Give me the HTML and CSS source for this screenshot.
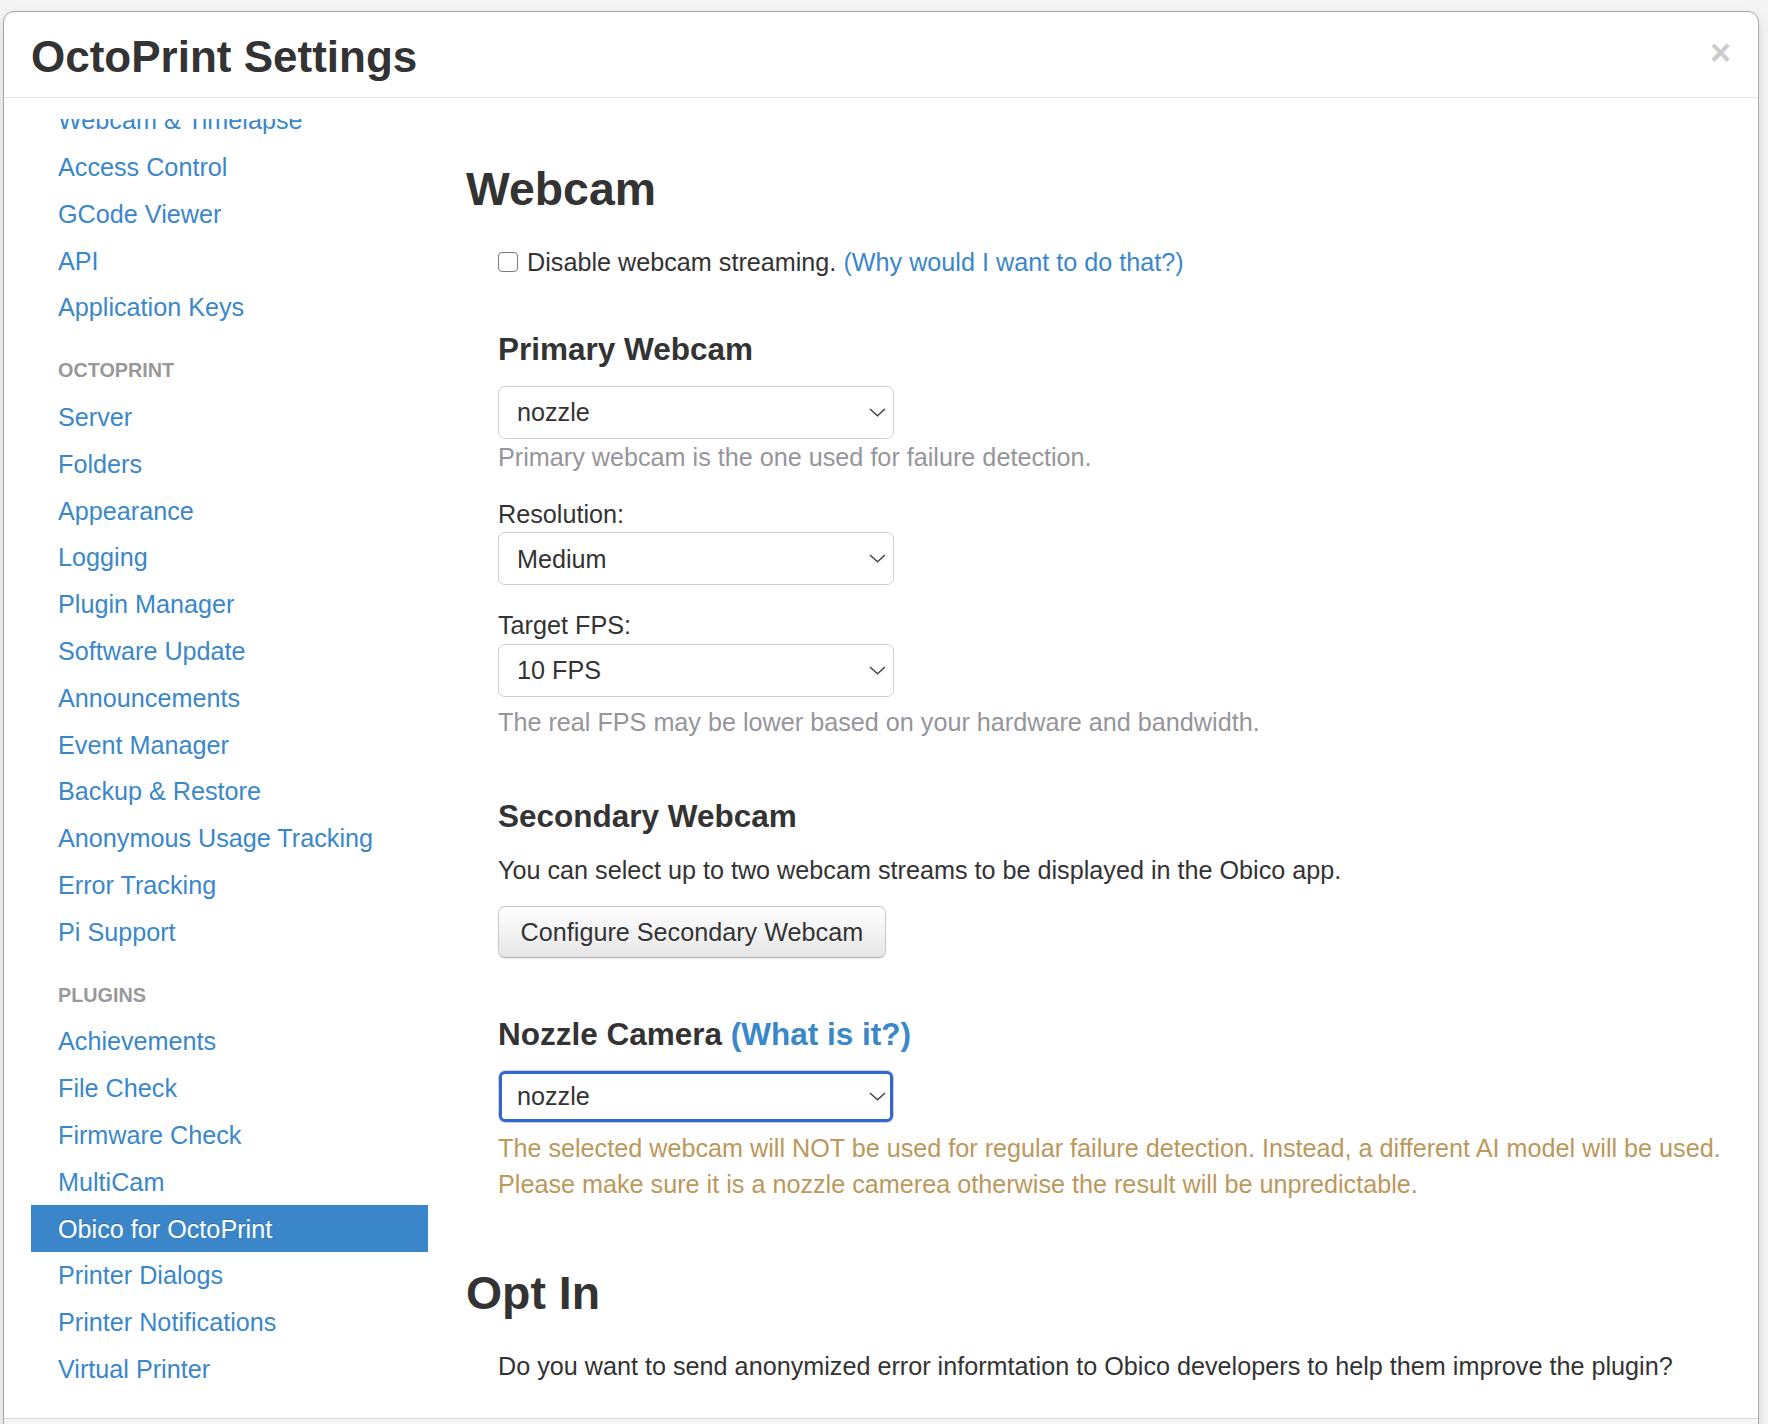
FILE: index.html
```html
<!DOCTYPE html>
<html lang="en">
<head>
<meta charset="utf-8">
<title>OctoPrint Settings</title>
<link rel="stylesheet" href="styles.css">
</head>
<body>
<div class="modal">
  <div class="modal-header">
    <h3 class="modal-title">OctoPrint Settings</h3>
    <button class="close" type="button">&times;</button>
  </div>
  <div class="modal-body">
    <nav class="settings-menu">
      <ul class="nav-list">
        <li><a href="#">Webcam &amp; Timelapse</a></li>
        <li><a href="#">Access Control</a></li>
        <li><a href="#">GCode Viewer</a></li>
        <li><a href="#">API</a></li>
        <li><a href="#">Application Keys</a></li>
        <li class="nav-header">OctoPrint</li>
        <li><a href="#">Server</a></li>
        <li><a href="#">Folders</a></li>
        <li><a href="#">Appearance</a></li>
        <li><a href="#">Logging</a></li>
        <li><a href="#">Plugin Manager</a></li>
        <li><a href="#">Software Update</a></li>
        <li><a href="#">Announcements</a></li>
        <li><a href="#">Event Manager</a></li>
        <li><a href="#">Backup &amp; Restore</a></li>
        <li><a href="#">Anonymous Usage Tracking</a></li>
        <li><a href="#">Error Tracking</a></li>
        <li><a href="#">Pi Support</a></li>
        <li class="nav-header">Plugins</li>
        <li><a href="#">Achievements</a></li>
        <li><a href="#">File Check</a></li>
        <li><a href="#">Firmware Check</a></li>
        <li><a href="#">MultiCam</a></li>
        <li class="active"><a href="#">Obico for OctoPrint</a></li>
        <li><a href="#">Printer Dialogs</a></li>
        <li><a href="#">Printer Notifications</a></li>
        <li><a href="#">Virtual Printer</a></li>
      </ul>
    </nav>
    <div class="settings-content">
      <h3 class="section-title first">Webcam</h3>
      <div class="section-body">
        <label class="checkbox-row">
          <input type="checkbox" class="check">
          <span>Disable webcam streaming. <a href="#">(Why would I want to do that?)</a></span>
        </label>

        <h4 class="sub-title first">Primary Webcam</h4>
        <div class="select-wrap sel-primary">
          <select class="select"><option>nozzle</option></select>
          <svg class="chevron" width="17" height="9" viewBox="0 0 17 9"><polyline points="1,1 8.5,7.8 16,1" fill="none" stroke="#444" stroke-width="1.5"/></svg>
        </div>
        <p class="help help-tight">Primary webcam is the one used for failure detection.</p>

        <label class="field-label lbl-res">Resolution:</label>
        <div class="select-wrap">
          <select class="select"><option>Medium</option></select>
          <svg class="chevron" width="17" height="9" viewBox="0 0 17 9"><polyline points="1,1 8.5,7.8 16,1" fill="none" stroke="#444" stroke-width="1.5"/></svg>
        </div>

        <label class="field-label lbl-fps">Target FPS:</label>
        <div class="select-wrap">
          <select class="select"><option>10 FPS</option></select>
          <svg class="chevron" width="17" height="9" viewBox="0 0 17 9"><polyline points="1,1 8.5,7.8 16,1" fill="none" stroke="#444" stroke-width="1.5"/></svg>
        </div>
        <p class="help help-spaced">The real FPS may be lower based on your hardware and bandwidth.</p>

        <h4 class="sub-title">Secondary Webcam</h4>
        <p class="text">You can select up to two webcam streams to be displayed in the Obico app.</p>
        <button class="btn" type="button">Configure Secondary Webcam</button>

        <h4 class="sub-title">Nozzle Camera <a href="#">(What is it?)</a></h4>
        <div class="select-wrap sel-nozzle">
          <select class="select focused"><option>nozzle</option></select>
          <svg class="chevron" width="17" height="9" viewBox="0 0 17 9"><polyline points="1,1 8.5,7.8 16,1" fill="none" stroke="#444" stroke-width="1.5"/></svg>
        </div>
        <p class="warning">The selected webcam will NOT be used for regular failure detection. Instead, a different AI model will be used.<br>Please make sure it is a nozzle camerea otherwise the result will be unpredictable.</p>
      </div>

      <h3 class="section-title opt">Opt In</h3>
      <div class="section-body">
        <p class="text opt-text">Do you want to send anonymized error informtation to Obico developers to help them improve the plugin?</p>
      </div>
    </div>
  </div>
  <div class="modal-footer"></div>
</div>
</body>
</html>
```

FILE: styles.css
```css
html, body {
  margin: 0;
  padding: 0;
  overflow: hidden;
  height: 100%;
}

body {
  background: #f4f4f4;
  font-family: "Helvetica Neue", Helvetica, "Liberation Sans", Arial, sans-serif;
  font-size: 25.2px;
  line-height: 36px;
  color: #333;
}

a {
  color: #3a87c9;
  text-decoration: none;
}

.modal {
  margin: 11px 0 0 3px;
  width: 1756px;
  box-sizing: border-box;
  background: #fff;
  border: 1px solid #a8a8a8;
  border-radius: 11px;
  box-shadow: 0 5px 12px rgba(0, 0, 0, 0.12);
  overflow: hidden;
}

.modal-header {
  display: flex;
  align-items: flex-start;
  justify-content: space-between;
  padding: 18px 27px 13px 27px;
  border-bottom: 1px solid #e5e5e5;
}

.modal-title {
  margin: 0;
  font-size: 44px;
  line-height: 54px;
  font-weight: bold;
  color: #333;
}

.close {
  margin: 5px 0 0 0;
  padding: 0;
  border: 0;
  background: transparent;
  font-family: "Liberation Sans", Arial, sans-serif;
  font-size: 36px;
  line-height: 36px;
  font-weight: bold;
  color: #000;
  opacity: 0.2;
  cursor: pointer;
}

.modal-body {
  display: flex;
  height: 1320px;
  padding: 21px 27px 0 27px;
  box-sizing: border-box;
  overflow: hidden;
}

.settings-menu {
  width: 397px;
  flex: none;
  overflow: hidden;
}

.nav-list {
  list-style: none;
  margin: -22.2px 0 0 0;
  padding: 0 27px;
}

.nav-list li a {
  display: block;
  margin: 0 -27px;
  padding: 5.4px 27px;
  line-height: 36px;
}

.nav-list li.active a {
  background: #3a86c8;
  color: #fff;
  text-shadow: 0 -1px 0 rgba(0, 0, 0, 0.2);
}

.nav-list .nav-header {
  margin-top: 16.2px;
  padding: 5.4px 0;
  font-size: 19.8px;
  line-height: 36px;
  font-weight: bold;
  text-transform: uppercase;
  color: #999;
}

.settings-content {
  margin-left: 38px;
  flex: 1;
  min-width: 0;
}

.section-title {
  margin: 0;
  font-size: 46.4px;
  line-height: 72px;
  font-weight: bold;
  color: #333;
}

.section-title.first {
  margin-top: 34px;
}

.section-title.opt {
  margin-top: 55px;
}

.section-body {
  padding-left: 32px;
}

.checkbox-row {
  display: flex;
  align-items: center;
  margin-top: 19px;
  height: 36px;
}

.check {
  appearance: none;
  -webkit-appearance: none;
  width: 20px;
  height: 20px;
  margin: 0 9px 0 0;
  box-sizing: border-box;
  border: 1.5px solid #7a7a7a;
  border-radius: 4px;
  background: #fff;
  flex: none;
}

.sub-title {
  margin: 58px 0 0 0;
  font-size: 31.5px;
  line-height: 36px;
  font-weight: bold;
  color: #333;
}

.sub-title.first {
  margin-top: 50.5px;
}

.select-wrap {
  position: relative;
  width: 396px;
  height: 53px;
  margin-top: 19px;
}

.select {
  appearance: none;
  -webkit-appearance: none;
  display: block;
  width: 100%;
  height: 100%;
  margin: 0;
  box-sizing: border-box;
  padding: 0 40px 0 18px;
  border: 1px solid #cfcfcf;
  border-radius: 7px;
  background: #fff;
  font-family: inherit;
  font-size: 25.2px;
  color: #333;
}

.select.focused {
  outline: 3px solid #2f66d2;
  outline-offset: -4px;
}

.chevron {
  position: absolute;
  right: 8px;
  top: 22px;
  pointer-events: none;
}

.help {
  margin: 0;
  color: #96959c;
}

.help-spaced {
  margin-top: 7px;
}

.field-label {
  display: block;
  margin: 0;
  color: #333;
}

.lbl-res {
  margin-top: 21.4px;
}

.lbl-fps {
  margin-top: 22px;
}

.field-label + .select-wrap {
  margin-top: 0.5px;
}

.text {
  margin: 18px 0 0 0;
}

.btn {
  display: block;
  margin-top: 18px;
  padding: 7.2px 21.6px;
  font-family: inherit;
  font-size: 25.2px;
  line-height: 36px;
  color: #333;
  text-shadow: 0 1px 1px rgba(255, 255, 255, 0.75);
  background: linear-gradient(to bottom, #ffffff, #e6e6e6);
  border: 1px solid #cccccc;
  border-bottom-color: #b3b3b3;
  border-radius: 7px;
  box-shadow: inset 0 1px 0 rgba(255, 255, 255, 0.2), 0 1px 3px rgba(0, 0, 0, 0.08);
  cursor: pointer;
}

.sel-nozzle {
  margin-top: 17.7px;
}

.warning {
  margin: 7.3px 0 0 0;
  color: #bc985b;
}

.opt-text {
  margin-top: 18.5px;
}

.modal-footer {
  height: 120px;
  background: #f5f5f5;
  border-top: 1px solid #ddd;
}
```
